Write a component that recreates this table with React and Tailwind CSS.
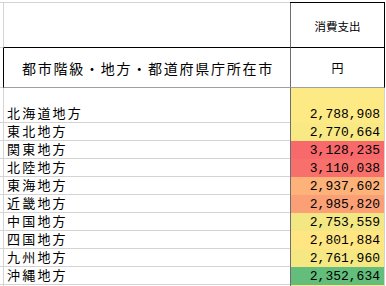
import React from "react";

const rows = [
  { label: "北海道地方", value: "2,788,908", bg: "bg-[#FEEA84]", tall: true },
  { label: "東北地方", value: "2,770,664", bg: "bg-[#F8E984]" },
  { label: "関東地方", value: "3,128,235", bg: "bg-[#F8696B]" },
  { label: "北陸地方", value: "3,110,038", bg: "bg-[#F8706C]" },
  { label: "東海地方", value: "2,937,602", bg: "bg-[#FCB279]" },
  { label: "近畿地方", value: "2,985,820", bg: "bg-[#FBA076]" },
  { label: "中国地方", value: "2,753,559", bg: "bg-[#F2E783]" },
  { label: "四国地方", value: "2,801,884", bg: "bg-[#FFE683]" },
  { label: "九州地方", value: "2,761,960", bg: "bg-[#F5E883]" },
  { label: "沖縄地方", value: "2,352,634", bg: "bg-[#63BE7B]" },
  { label: "", value: "", bg: "bg-[#FEE884]" },
];

const jp = "font-['Noto_Sans_CJK_JP','Noto_Sans',sans-serif]";

export default function App() {
  return (
    <div className={`w-[386px] h-[286px] overflow-hidden bg-white text-black ${jp}`}>
      {/* top thin row */}
      <div className="flex h-[3px]">
        <div className="w-[290px] border-b border-b-[#d4d4d4]" />
        <div className="w-[95px] border-b border-b-black" />
        <div className="flex-1" />
      </div>
      {/* header row 1 */}
      <div className="flex h-[45px]">
        <div className="w-[3px] border-b border-b-[#d4d4d4]" />
        <div className="w-[287px] border-l border-l-[#d4d4d4] border-b border-b-black" />
        <div className="w-[95px] border-l border-l-[#6e6e6e] border-r border-r-black border-b border-b-black flex items-center justify-center pt-[4px] text-[11.5px] leading-none">
          消費支出
        </div>
        <div className="flex-1" />
      </div>
      {/* header row 2 */}
      <div className="flex h-[40px]">
        <div className="w-[3px] border-b border-b-[#d4d4d4]" />
        <div className="w-[287px] border-l border-l-black border-b border-b-[#a0a0a0] flex items-center justify-center text-[14px] tracking-[1.75px] leading-none pl-[2px]">
          都市階級・地方・都道府県庁所在市
        </div>
        <div className="w-[95px] border-l border-l-[#6e6e6e] border-r border-r-black border-b border-b-[#a0a0a0] flex items-center justify-center text-[12px] leading-none">
          円
        </div>
        <div className="flex-1" />
      </div>
      {/* data rows */}
      {rows.map((r, i) => (
        <div key={i} className={`flex ${r.tall ? "h-[35px]" : "h-[18px]"}`}>
          <div className="w-[3px] border-b border-b-[#d4d4d4]" />
          <div className="w-[287px] border-l border-l-[#d4d4d4] border-b border-b-[#d4d4d4] flex items-end pl-[3px] pb-[1px] text-[13px] tracking-[2.2px] leading-[16px]">
            {r.label}
          </div>
          <div
            className={`w-[94px] border-l border-l-[#6e6e6e] ${r.bg} flex items-end justify-end pr-[4px] font-['Liberation_Mono',monospace] text-[13px] leading-[17px]`}
          >
            {r.value}
          </div>
          <div className="flex-1 border-l border-l-[#d4d4d4]" />
        </div>
      ))}
    </div>
  );
}
